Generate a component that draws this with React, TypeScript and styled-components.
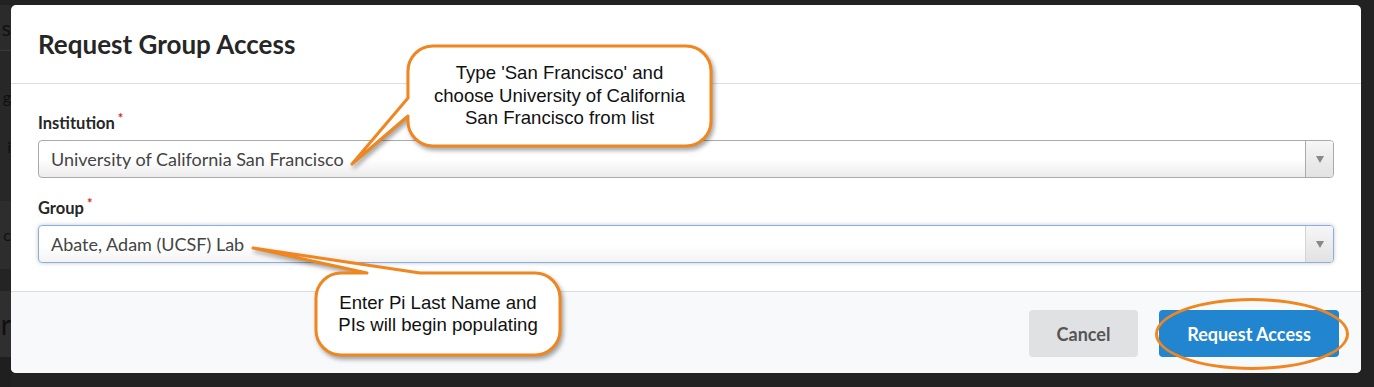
import React from "react";
import styled, { createGlobalStyle } from "styled-components";

const Global = createGlobalStyle`
  html, body { margin: 0; padding: 0; background: #222; }
  body { font-family: Lato, "Open Sans", sans-serif; }
  * { box-sizing: border-box; }
`;

const ORANGE = "#ef8620";

const Screen = styled.div`
  position: relative;
  width: 1374px;
  height: 387px;
  overflow: hidden;
  background: #222;
`;

/* dimmed page behind the modal (only its left edge is visible) */
const PageStrip = styled.div`
  width: 11px;
  height: 387px;
  display: flex;
  flex-direction: column;
  overflow: hidden;
`;

const PageBand = styled.div<{ $h: number; $bg: string; $size?: number; $align?: string }>`
  height: ${(p) => p.$h}px;
  background: ${(p) => p.$bg};
  display: flex;
  flex-direction: column;
  justify-content: ${(p) => p.$align || "center"};
  align-items: flex-end;
  color: #101010;
  font-family: Lato, sans-serif;
  font-size: ${(p) => p.$size || 16}px;
  line-height: 1;
  white-space: nowrap;
`;

const Frag = styled.span<{ $gap?: number }>`
  margin-top: ${(p) => p.$gap || 0}px;
`;

const Modal = styled.div`
  position: absolute;
  left: 11px;
  top: 5px;
  width: 1350px;
  height: 368px;
  background: #fff;
  border-radius: 5px;
  overflow: hidden;
  display: flex;
  flex-direction: column;
`;

const Header = styled.div`
  height: 79px;
  padding: 0 27px;
  display: flex;
  align-items: center;
  border-bottom: 1px solid #dedede;
`;

const Title = styled.h2`
  margin: 0;
  font-size: 26px;
  font-weight: 700;
  color: #262626;
`;

const Body = styled.div`
  padding: 29px 27px 28px 27px;
  display: flex;
  flex-direction: column;
  gap: 20px;
`;

const Field = styled.div`
  display: flex;
  flex-direction: column;
`;

const Label = styled.label`
  font-size: 16.5px;
  font-weight: 700;
  line-height: 20px;
  color: #262626;
  margin-bottom: 7px;
`;

const Req = styled.span`
  color: #db2828;
  font-size: 13px;
  margin-left: 3px;
  vertical-align: super;
  line-height: 0;
`;

const Select = styled.div<{ $focused?: boolean }>`
  height: 38px;
  border: 1px solid ${(p) => (p.$focused ? "#86aee8" : "#aaa")};
  border-radius: 4px;
  display: flex;
  overflow: hidden;
  background: ${(p) =>
    p.$focused
      ? "linear-gradient(to bottom, #fff 0%, #fff 55%, #f3f3f3 100%)"
      : "linear-gradient(to bottom, #fff 0%, #fff 50%, #ececec 100%)"};
  box-shadow: ${(p) => (p.$focused ? "0 0 4px rgba(0,0,0,0.22)" : "none")};
`;

const Value = styled.div`
  flex: 1;
  padding-left: 12px;
  font-size: 18px;
  line-height: 36px;
  color: #444;
`;

const Arrow = styled.div<{ $focused?: boolean }>`
  width: 28px;
  border-left: 1px solid ${(p) => (p.$focused ? "#d4d4d4" : "#aaa")};
  background: linear-gradient(to bottom, #f6f6f6 0%, #e2e2e2 100%);
  display: flex;
  align-items: center;
  justify-content: center;
  &::after {
    content: "";
    border-left: 4px solid transparent;
    border-right: 4px solid transparent;
    border-top: 7px solid #888;
  }
`;

const Footer = styled.div`
  flex: 1;
  background: #f8f9fa;
  border-top: 1px solid #dcdcdc;
  display: flex;
  justify-content: flex-end;
  align-items: flex-start;
  padding: 18px 22px 0 0;
  gap: 21px;
`;

const Button = styled.button<{ $primary?: boolean }>`
  height: 47px;
  width: ${(p) => (p.$primary ? 180 : 109)}px;
  border: none;
  border-radius: 4px;
  font-family: Lato, sans-serif;
  font-size: 18px;
  font-weight: 700;
  background: ${(p) => (p.$primary ? "#2185d0" : "#e0e1e2")};
  color: ${(p) => (p.$primary ? "#fff" : "#555")};
  padding: 0;
`;

const Ring = styled.div`
  position: absolute;
  left: 1155px;
  top: 298px;
  width: 194px;
  height: 72px;
  border: 3px solid ${ORANGE};
  border-radius: 50%;
`;

const Bubble = styled.div<{ $x: number; $y: number; $w: number; $h: number }>`
  position: absolute;
  left: ${(p) => p.$x}px;
  top: ${(p) => p.$y}px;
  width: ${(p) => p.$w}px;
  height: ${(p) => p.$h}px;
  display: flex;
  align-items: center;
  justify-content: center;
`;

const BubbleShape = styled.svg`
  position: absolute;
  inset: 0;
  width: 100%;
  height: 100%;
  overflow: visible;
  filter: drop-shadow(2px 3px 2px rgba(0, 0, 0, 0.35));
`;

const BubbleText = styled.div`
  position: relative;
  font-family: "Liberation Sans", Arial, sans-serif;
  font-size: 18.6px;
  line-height: 22.5px;
  color: #111;
  text-align: center;
  white-space: nowrap;
`;

function Callout({
  x,
  y,
  w,
  h,
  d,
  lines,
}: {
  x: number;
  y: number;
  w: number;
  h: number;
  d: string;
  lines: string[];
}) {
  return (
    <Bubble $x={x} $y={y} $w={w} $h={h}>
      <BubbleShape viewBox={`0 0 ${w} ${h}`}>
        <path d={d} fill="#fff" stroke={ORANGE} strokeWidth={3} strokeLinejoin="round" />
      </BubbleShape>
      <BubbleText>
        {lines.map((l, i) => (
          <div key={i}>{l}</div>
        ))}
      </BubbleText>
    </Bubble>
  );
}

export default function App() {
  const d1 =
    "M25,0 H278 A25,25 0 0 1 303,25 V75 A25,25 0 0 1 278,100 H25 A25,25 0 0 1 0,75 V70 L-56,118 L0,52 V25 A25,25 0 0 1 25,0 Z";
  const d2 =
    "M25,0 H51 L-63,-25 L104,0 H219 A25,25 0 0 1 244,25 V57 A25,25 0 0 1 219,82 H25 A25,25 0 0 1 0,57 V25 A25,25 0 0 1 25,0 Z";
  return (
    <Screen>
      <Global />
      <PageStrip>
        <PageBand $h={5} $bg="#222" />
        <PageBand $h={45} $bg="#2b2b2b" $size={22}>
          <Frag>s</Frag>
        </PageBand>
        <PageBand $h={1} $bg="#3a3a3a" />
        <PageBand $h={150} $bg="#272727" $align="flex-start">
          <Frag $gap={38}>g</Frag>
          <Frag $gap={34}>i</Frag>
        </PageBand>
        <PageBand $h={68} $bg="#2d2d2d">
          <Frag>c</Frag>
        </PageBand>
        <PageBand $h={22} $bg="#242424" />
        <PageBand $h={66} $bg="#2f2f2f" $size={28}>
          <Frag>r</Frag>
        </PageBand>
        <PageBand $h={30} $bg="#1f1f1f" />
      </PageStrip>

      <Modal>
        <Header>
          <Title>Request Group Access</Title>
        </Header>
        <Body>
          <Field>
            <Label>
              Institution<Req>*</Req>
            </Label>
            <Select>
              <Value>University of California San Francisco</Value>
              <Arrow />
            </Select>
          </Field>
          <Field>
            <Label>
              Group<Req>*</Req>
            </Label>
            <Select $focused>
              <Value>Abate, Adam (UCSF) Lab</Value>
              <Arrow $focused />
            </Select>
          </Field>
        </Body>
        <Footer>
          <Button>Cancel</Button>
          <Button $primary>Request Access</Button>
        </Footer>
      </Modal>

      <Ring />
      <Callout
        x={408}
        y={46}
        w={303}
        h={100}
        d={d1}
        lines={["Type 'San Francisco' and", "choose University of California", "San Francisco from list"]}
      />
      <Callout
        x={316}
        y={273}
        w={244}
        h={82}
        d={d2}
        lines={["Enter Pi Last Name and", "PIs will begin populating"]}
      />
    </Screen>
  );
}
